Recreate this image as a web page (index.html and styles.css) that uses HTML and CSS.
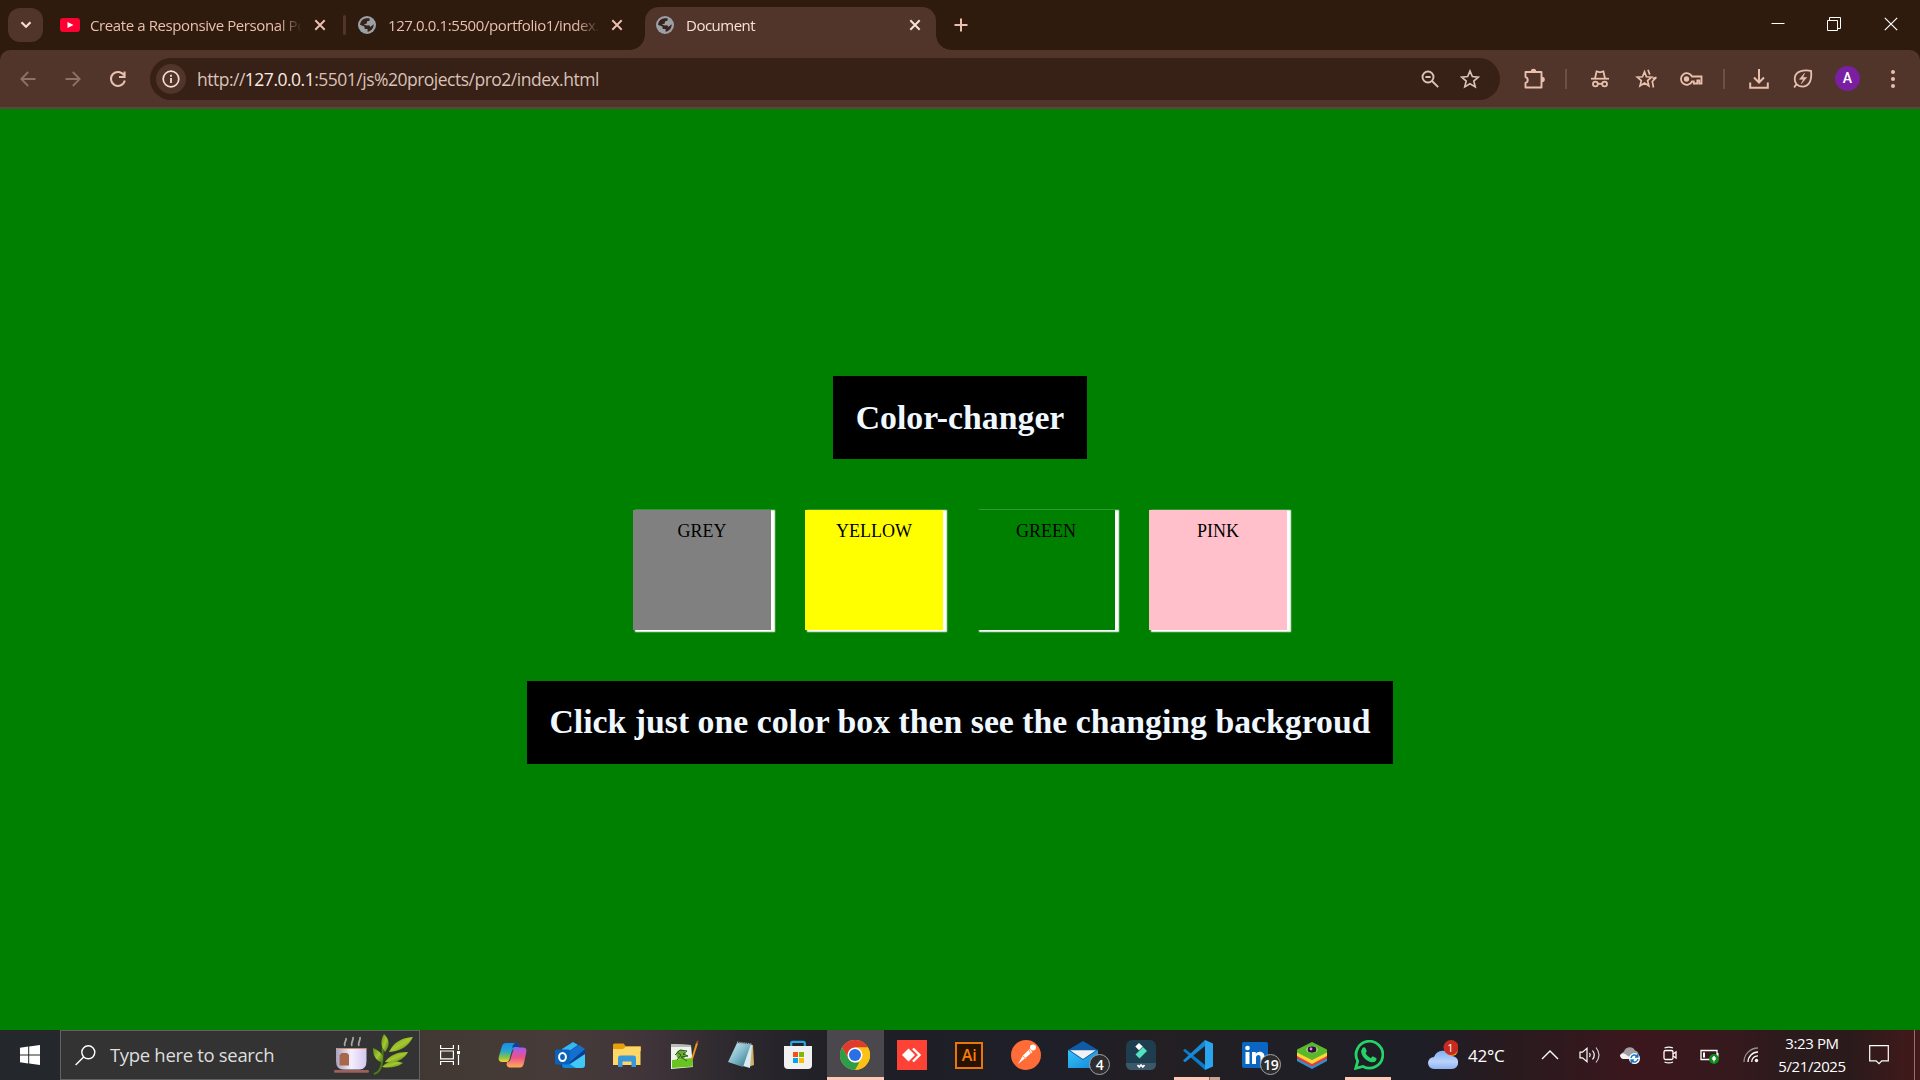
FILE: index.html
```html
<!DOCTYPE html>
<html lang="en">
<head>
<meta charset="utf-8">
<title>Document</title>
<link rel="stylesheet" href="styles.css">
</head>
<body>
<svg class="defs" width="0" height="0" aria-hidden="true">
  <defs>
    <symbol id="x" viewBox="0 0 12 12"><path d="M1.3 1.3l9.4 9.4M10.7 1.3l-9.4 9.4" fill="none" stroke="currentColor" stroke-width="2"/></symbol>
    <symbol id="globe" viewBox="0 0 18 18"><circle cx="9" cy="9" r="9" fill="#9aa0a6"/><path d="M8.2 2.2L11.5 2.2L11.7 4.4L9.2 5.6L8.8 7.4L5.7 8.6L8.9 9.4L11.4 9.3L12.2 11L15.7 8.2C15.8 11.8 13.7 15 9.6 15.8L9.5 13.1L6.8 13L6.3 10.6L2 8.8C2.4 5 4.7 2.7 8.2 2.2Z" fill="#38221a"/><path d="M9.2 5.5L12.8 4.8L14.2 7.1L11.5 8.7L8.7 7.5Z" fill="#9aa0a6"/></symbol>
    <linearGradient id="cp1" x1="0" y1="0" x2="0" y2="1"><stop offset="0" stop-color="#168cf0"/><stop offset=".45" stop-color="#2aa9c8"/><stop offset=".75" stop-color="#82c34c"/><stop offset="1" stop-color="#ffd02c"/></linearGradient>
    <linearGradient id="cp2" x1="0" y1="0" x2="0" y2="1"><stop offset="0" stop-color="#a45bf0"/><stop offset=".5" stop-color="#ec5288"/><stop offset="1" stop-color="#ffae55"/></linearGradient>
    <linearGradient id="cloud" x1="0" y1="0" x2="0" y2="1"><stop offset="0" stop-color="#7fb0f2"/><stop offset=".6" stop-color="#b9d2fb"/><stop offset="1" stop-color="#8fb1ef"/></linearGradient>
    <linearGradient id="cup" x1="0" y1="0" x2="1" y2="0"><stop offset="0" stop-color="#a8a0bf"/><stop offset=".5" stop-color="#f4efff"/><stop offset="1" stop-color="#d4c6ee"/></linearGradient>
    <linearGradient id="leaf" x1="0" y1="0" x2="1" y2="1"><stop offset="0" stop-color="#5d8f13"/><stop offset=".5" stop-color="#a7c930"/><stop offset="1" stop-color="#3c6f12"/></linearGradient>
    <linearGradient id="pad" x1="0" y1="0" x2="1" y2="1"><stop offset="0" stop-color="#d4f0f4"/><stop offset=".5" stop-color="#7fb9c9"/><stop offset="1" stop-color="#28687d"/></linearGradient>
    <linearGradient id="mail" x1="0" y1="0" x2="1" y2="1"><stop offset="0" stop-color="#35c3f7"/><stop offset="1" stop-color="#1486d8"/></linearGradient>
  </defs>
</svg>

<header class="tabstrip">
  <button class="tab-search"><svg width="12" height="8" viewBox="0 0 12 8"><path d="M1.5 1.3L6 5.8l4.5-4.5" fill="none" stroke="#f5ded5" stroke-width="2.2"/></svg></button>
  <div class="tab tab-first">
    <svg class="fav" width="20" height="14" viewBox="0 0 20 14"><rect width="20" height="14" rx="3" fill="#ff0033"/><path d="M7.5 4l6 3-6 3z" fill="#fff"/></svg>
    <span class="title t1">Create a Responsive Personal Po</span>
    <svg class="close" width="12" height="12"><use href="#x"/></svg>
  </div>
  <i class="tab-sep"></i>
  <div class="tab">
    <svg class="fav" width="18" height="18"><use href="#globe"/></svg>
    <span class="title t2">127.0.0.1:5500/portfolio1/index.</span>
    <svg class="close" width="12" height="12"><use href="#x"/></svg>
  </div>
  <div class="tab active">
    <svg class="fav" width="18" height="18"><use href="#globe"/></svg>
    <span class="title t3">Document</span>
    <svg class="close" width="12" height="12"><use href="#x"/></svg>
  </div>
  <button class="new-tab"><svg width="14" height="14" viewBox="0 0 14 14"><path d="M7 .5v13M.5 7h13" stroke="currentColor" stroke-width="2"/></svg></button>
  <div class="win">
    <span class="w-min"><svg width="14" height="14" viewBox="0 0 14 14"><path d="M.5 6.500h13" stroke="#fff" stroke-width="1"/></svg></span>
    <span class="w-max"><svg width="14" height="14" viewBox="0 0 14 14" fill="none" stroke="#fff"><path d="M.5 3.500h10v10H.5zM2.500 3.500V.5h11v11H11"/></svg></span>
    <span class="w-close"><svg width="14" height="14" viewBox="0 0 14 14"><path d="M.8.8l12.4 12.4M13.2.8L.8 13.2" stroke="#fff" stroke-width="1.2"/></svg></span>
  </div>
</header>

<nav class="toolbar">
  <div class="nav-buttons">
    <span class="dim"><svg width="16" height="16" viewBox="0 0 16 16" fill="none" stroke="currentColor" stroke-width="1.8"><path d="M15.5 8H1.6M8.2 1L1.3 8l6.9 7"/></svg></span>
    <span class="dim"><svg width="16" height="16" viewBox="0 0 16 16" fill="none" stroke="currentColor" stroke-width="1.8"><path d="M.5 8h13.9M7.8 1l6.9 7-6.9 7"/></svg></span>
    <span><svg width="18" height="18" viewBox="0 0 18 18" fill="none" stroke="currentColor" stroke-width="2"><path d="M15 5.3A7 7 0 1 0 15.8 10.5M15.6 1.6V7H10"/></svg></span>
  </div>
  <div class="omnibox">
    <span class="info"><svg width="18" height="18" viewBox="0 0 18 18"><circle cx="9" cy="9" r="7.8" fill="none" stroke="#f5ded5" stroke-width="1.7"/><path d="M9 8v5M9 4.8v1.9" stroke="#f5ded5" stroke-width="1.8"/></svg></span>
    <span class="url">http://<b>127.0.0.1</b>:5501/js%20projects/pro2/index.html</span>
    <svg class="o-zoom" width="18" height="18" viewBox="0 0 18 18" fill="none" stroke="#d9c2ba" stroke-width="1.9"><circle cx="7" cy="7" r="5.5"/><path d="M11 11l6.2 6.2M4.4 7h5.2"/></svg>
    <svg width="20" height="20" viewBox="0 0 18 18" fill="none" stroke="#d9c2ba" stroke-width="1.5"><path d="M9 1.8l2.1 5 5.4.5-4.1 3.500 1.300 5.300L9 13.300l-4.700 2.800 1.300-5.300-4.100-3.500 5.400-.5z"/></svg>
  </div>
  <div class="actions">
    <span class="s-ext"><svg width="22" height="22" viewBox="0 0 22 22"><path d="M2.500 4h16v15.500h-16v-4.600a3 3 0 0 0 0-5.800z" fill="none" stroke="currentColor" stroke-width="1.9" stroke-linejoin="round"/><path d="M7.8 3.500a2.700 2.700 0 0 1 5.400 0zM19 8.700a2.700 2.700 0 0 1 0 5.600z" fill="currentColor"/></svg></span>
    <span class="s-sep"><i></i></span>
    <span class="s-inc"><svg width="18" height="18" viewBox="0 0 18 18" fill="none" stroke="currentColor" stroke-width="1.8"><path d="M0 8.700h18"/><path d="M4 8.500L5.600 1.300 9 2.300l3.400-1L14 8.500"/><circle cx="4.400" cy="14" r="2.400"/><circle cx="13.600" cy="14" r="2.400"/><path d="M6.800 13.800h4.400"/></svg></span>
    <span class="s-star"><svg width="22" height="20" viewBox="0 0 22 20" fill="none" stroke="currentColor" stroke-width="1.700"><path d="M9.500 2.800l1.900 5 5.200.4-4 3.400 1.300 5.200-4.400-2.800L5 16.800l1.300-5.200-4-3.400 5.200-.4z"/><path d="M13 .8l1.800 4.800M17.500 9.500L21.500 8.300M21.300 8.300l-4 4.200 1.200 6"/></svg></span>
    <span class="s-key"><svg width="24" height="16" viewBox="0 0 24 16" fill="none" stroke="currentColor" stroke-width="1.800"><path d="M13 5.500h9.500v7h-2.200V9.500h-2v3h-3.500v-2H13a5.800 5.800 0 1 1 0-5z"/><circle cx="7.500" cy="8" r="2.700" fill="currentColor" stroke="none"/></svg></span>
    <span class="s-sep"><i></i></span>
    <span class="s-dl"><svg width="20" height="22" viewBox="0 0 20 22" fill="none" stroke="currentColor" stroke-width="2"><path d="M10 1v13M5 9.500l5 5 5-5M1.200 14.500v5.300h17.600v-5.300"/></svg></span>
    <span class="s-leaf"><svg width="20" height="20" viewBox="0 0 20 20" fill="none" stroke="currentColor" stroke-width="1.800"><path d="M18 1.800C11 .8 1.700 1.600 1.700 10c0 2 .5 3.600 1.700 5 1.500 1.700 4 2.600 6.600 2.600C17.500 17 19 9 18 1.800zM3.400 15L1.200 18.500"/><path d="M11.500 4.300L6.500 10.300h4L8.300 14.700l5.400-6.200H9.800z" fill="currentColor" stroke-width=".6"/></svg></span>
    <span class="s-ava"><b>A</b></span>
    <span class="s-dots"><svg width="4" height="18" viewBox="0 0 4 18" fill="currentColor"><circle cx="2" cy="2" r="2"/><circle cx="2" cy="9" r="2"/><circle cx="2" cy="16" r="2"/></svg></span>
  </div>
</nav>

<main class="page">
  <h1 class="banner banner-top">Color-changer</h1>
  <div class="boxes">
    <div class="box grey">GREY</div>
    <div class="box yellow">YELLOW</div>
    <div class="box green">GREEN</div>
    <div class="box pink">PINK</div>
  </div>
  <h1 class="banner">Click just one color box then see the changing backgroud</h1>
</main>

<footer class="taskbar">
  <span class="start"><svg width="20" height="20" viewBox="0 0 20 20" fill="#fff"><path d="M0 2.700L8.200 1.500V9.500H0zM9.200 1.400L20 0v9.500H9.200zM0 10.500h8.200v8L0 17.300zM9.200 10.500H20V20L9.200 18.600z"/></svg></span>
  <div class="search">
    <svg width="21" height="21" viewBox="0 0 21 21" fill="none" stroke="#fff" stroke-width="1.400"><circle cx="13.300" cy="7.300" r="6.500"/><path d="M8.600 12L.6 20"/></svg>
    <span class="search-text">Type here to search</span>
    <svg class="tea" width="80" height="42" viewBox="0 0 80 42">
      <path d="M11 12c-2-3 2-5 1-8M18 12c-2-3 2-5 1-9M25 12c-2-3 2-5 1-9" fill="none" stroke="#aaa5a5" stroke-width="1.800"/>
      <rect x="0" y="36" width="35" height="2.800" rx="1.400" fill="#9a6258"/>
      <path d="M2 14h30.500v13q0 8.500-7 8.500H9q-7 0-7-8.500z" fill="url(#cup)"/><path d="M3 14.500h29" stroke="#c98d68" stroke-width="1"/>
      <path d="M5.500 21l2-2h5.500l2 2v10.500H5.500z" fill="#a76749"/>
      <path d="M40 40c10-3 8-16 9-32" fill="none" stroke="#4d7d14" stroke-width="2"/>
      <g fill="url(#leaf)"><path d="M50 0c6 6 6 12 1 18-4-6-5-11-1-18z"/><path d="M79 3c-5 10-13 14-24 15 5-10 12-14 24-15z"/><path d="M39 14c8 3 11 8 10 15-7-2-10-7-10-15z"/><path d="M74 18c-5 9-13 11-23 10 5-7 12-10 23-10z"/><path d="M69 29c-7 5-14 5-21 4 5-6 12-7 21-4z"/></g>
    </svg>
  </div>
  <span class="taskview"><svg width="20" height="20" viewBox="0 0 20 20" fill="none" stroke="#fff" stroke-width="1.200"><path d="M.6 0v3.500h12.800V0M.6 20v-3.500h12.800V20M.6 6h12.800v7.800H.6zM18.500 0v5M18.500 10v10"/><path d="M17 6h3v3.200h-3z" fill="#fff" stroke="none"/></svg></span>

  <div class="apps">
    <span class="app"><svg width="30" height="28" viewBox="0 0 30 28"><path d="M8 2h10c2 0 3 1 3.500 3L20 8h-3c-2 0-3 1-3.500 3l-2 7c-.8 2.500-2 3-4 3H4c-3 0-4-2.500-3-6L4 5c.6-2 2-3 4-3z" fill="url(#cp1)"/><path d="M17 2h2c2 0 2.500 2 3 4h-5c-2 0-3 1-3.500 3L15 4z" fill="#173d98"/><path d="M22 26.500H12c-2 0-3-1-3.500-3L9 21c2 0 3-1 3.500-3l2.500-8c1-3 2-3.500 4.500-3.500H25c3 0 4 2 3.200 5L26 22c-.7 3-2 4.500-4 4.500z" fill="url(#cp2)"/></svg></span>
    <span class="app"><svg width="30" height="28" viewBox="0 0 30 28"><path d="M6 9L18 1l12 8v18H6z" fill="#0b3f91"/><path d="M7 8L18 1l5 3-16 11z" fill="#39b7ef"/><path d="M8 14L24 4l6 4-15 13z" fill="#1470ce"/><path d="M9 27l21-14v11q0 3-3 3z" fill="#42c8f4"/><path d="M7 18l14 9H10q-3 0-3-3z" fill="#1188d9"/><rect y="8.500" width="15" height="15" rx="1.500" fill="#0a62bd"/><ellipse cx="7.500" cy="16" rx="3.400" ry="4" fill="none" stroke="#fff" stroke-width="2"/></svg></span>
    <span class="app"><svg width="28" height="24" viewBox="0 0 28 24"><path d="M0 2q0-1.500 1.500-1.500h9l2.500 3h15V8H0z" fill="#e5a00b"/><path d="M0 6h10l3-2.500h14.500V22H0z" fill="#ffd767"/><path d="M5 24v-9q0-2.500 2.500-2.500h13Q23 12.500 23 15v9h-4.500v-5.500h-9V24z" fill="#3898dc"/></svg></span>
    <span class="app"><svg width="30" height="30" viewBox="0 0 30 30"><path d="M2 4l20 1 2 22L2 29z" fill="#f0f2ec"/><path d="M3 20l20-2 1 8.500L3 28z" fill="#68c520"/><path d="M2 4l20 1v2H2z" fill="#b9bdb9"/><circle cx="12" cy="14.500" r="4.800" fill="#6eaa36"/><path d="M6 15l5-5 7 1-4 3 5 2-7 1 6 4M8 20l4-5-4-3" fill="none" stroke="#2d5d1b" stroke-width="1"/><path d="M27 3l2 .6-5 15.400-1.800 2 .2-3z" fill="#e59a1e"/><path d="M27 3l1-2.500 1.500.6L29 3.600z" fill="#a04c36"/></svg></span>
    <span class="app"><svg width="28" height="28" viewBox="0 0 28 28"><path d="M10 2l16 2 1 20-6 2z" fill="#d2b06a"/><path d="M10 2l15 2-2 23-7-2z" fill="#d5edf2"/><path d="M10 2l14 1-8 23L1 21z" fill="url(#pad)"/><path d="M10 1.500L25 3.500" stroke="#9aa" stroke-width="2.200" stroke-dasharray="1.200 1"/></svg></span>
    <span class="app"><svg width="30" height="30" viewBox="0 0 30 30"><path d="M8.200 7V3.200Q8.200 1.800 9.600 1.800h10.800q1.400 0 1.400 1.400V7" fill="none" stroke="#27a6e8" stroke-width="2.200"/><path d="M1 6h28v19q0 4-4 4H5q-4 0-4-4z" fill="#f1f1f1"/><path d="M10 12h5v5h-5z" fill="#f1511b"/><path d="M16 12h5v5h-5z" fill="#80b900"/><path d="M10 18h5v5h-5z" fill="#00a4ef"/><path d="M16 18h5v5h-5z" fill="#fbbc09"/></svg></span>
    <span class="app current"><svg width="30" height="30" viewBox="0 0 30 30"><circle cx="15" cy="15" r="15" fill="#fbc116"/><path d="M2 7.500A15 15 0 0 1 28 7.500H15L8.500 18.800z" fill="#e03b2f"/><path d="M2 7.500L8.500 18.800Q11 22.500 15 22.500h6.500L15 30A15 15 0 0 1 2 7.500z" fill="#2d9d49"/><path d="M21.500 18.700L15 30A15 15 0 0 0 28 7.500H15z" fill="#fbc116"/><circle cx="15" cy="15" r="7.500" fill="#fff"/><circle cx="15" cy="15" r="6" fill="#2b6fe4"/></svg></span>
    <span class="app"><svg width="30" height="30" viewBox="0 0 30 30"><path d="M0 0h30v30H0z" fill="#fe4236"/><path d="M5 15l6.500-6.500L18 15l-6.500 6.500z" fill="#fff"/><path d="M16 8.500l6.500 6.500-6.500 6.500" fill="none" stroke="#fff" stroke-width="2.400"/></svg></span>
    <span class="app ai"><b>Ai</b></span>
    <span class="app"><svg width="30" height="30" viewBox="0 0 30 30"><circle cx="15" cy="15" r="15" fill="#ff6c37"/><circle cx="22" cy="7.500" r="3" fill="#fff"/><path d="M18.500 9l3 3-6.500 5.500-8 6.500 5-8.500z" fill="#fff"/><path d="M12 16l3 3M18 10l2 4" stroke="#ff9b78" stroke-width="1"/></svg></span>
    <span class="app"><svg width="30" height="30" viewBox="0 0 30 30"><path d="M0 10L15 1l15 9v18H0z" fill="#0e5ba8"/><path d="M0 10l15 10 15-10v18H0z" fill="url(#mail)"/><path d="M2 10.300h26L15 19z" fill="#f2f2f2"/></svg><b class="badge">4</b></span>
    <span class="app"><svg width="30" height="30" viewBox="0 0 30 30"><rect width="30" height="30" rx="6" fill="#1e3d4e"/><path d="M0 23h30v1q0 6-6 6H6q-6 0-6-6z" fill="#3b586a"/><path d="M13 3l3.800 3.500L13 10.300 9.300 6.500z" fill="#fff"/><path d="M17 7l4 4-7.500 7.500-4-4z" fill="#50e3c2"/><path d="M11.500 25l1.700 2 1.800-2 1.800 2 1.700-2" fill="none" stroke="#fff" stroke-width="1.800"/></svg></span>
    <span class="app run-split"><svg width="30" height="30" viewBox="0 0 30 30"><path d="M0 10.500l2-1.800 20 16.300v5z" fill="#087bcb"/><path d="M0 20.500l2 1.800L22 6V0z" fill="#168ad8"/><path d="M22 0l8 3.500v23L22 30z" fill="#2aa4ef"/></svg></span>
    <span class="app"><svg width="30" height="30" viewBox="0 0 30 30"><rect x="2" y="2" width="26" height="26" rx="2" fill="#0a66c2"/><path d="M5.500 12h4v12h-4zM12 12h3.700v1.700c2-3 8.800-3 8.800 3V24h-4v-6.500c0-3.500-4.500-3-4.500 0V24h-4z" fill="#fff"/><circle cx="7.500" cy="8" r="2.300" fill="#fff"/></svg><b class="badge">19</b></span>
    <span class="app"><svg width="30" height="28" viewBox="0 0 30 28"><path d="M0 17l15 8 15-8v3l-15 8-15-8z" fill="#2695d9"/><path d="M0 14l15 8 15-8v3.500l-15 8-15-8z" fill="#e93c37"/><path d="M0 10.500l15 8 15-8V15l-15 8-15-8z" fill="#ffd43b"/><path d="M0 8.500L15 1l15 7.500v3L15 19 0 11.500z" fill="#5ab928"/><ellipse cx="15" cy="8.500" rx="5.500" ry="3.600" fill="#e9f3e2"/><ellipse cx="15" cy="8.500" rx="4.500" ry="3.200" fill="#261334"/><circle cx="14" cy="8" r="1.400" fill="#eb83e0"/></svg></span>
    <span class="app run"><svg width="30" height="30" viewBox="0 0 30 30"><path d="M1.700 28.300l2-7.200A13.400 13.400 0 1 1 9 26.400z" fill="none" stroke="#25d366" stroke-width="2.800"/><path d="M8.500 8q1.500-1.500 2.800-.2l1.500 3.500-1.300 1.900q2 3.500 5.300 5l1.900-1.900 3.400 1.700q1.300.7-.3 3-3 2.600-7.800 0Q9 18 7.500 13.500 6.500 10.500 8.500 8z" fill="#25d366"/></svg></span>
  </div>

  <div class="tray">
    <span class="weather"><svg width="30" height="30" viewBox="0 0 30 30"><path d="M6 29a6 6 0 0 1 0-12 9.500 9.500 0 0 1 17.500-1A6.500 6.500 0 0 1 24 29z" fill="url(#cloud)"/><circle cx="24" cy="10" r="6" fill="#ee9b20"/><circle cx="23" cy="7.500" r="7.500" fill="#c92a1e"/></svg><b class="alert">1</b><span class="temp">42°C</span></span>
    <span class="t-chev"><svg width="18" height="10" viewBox="0 0 18 10"><path d="M1 9l8-8 8 8" fill="none" stroke="#fff" stroke-width="1.400"/></svg></span>
    <span class="t-ico"><svg width="22" height="18" viewBox="0 0 22 18" fill="none" stroke="#fff" stroke-width="1.200"><path d="M1 6.200h2.500L8 2.300v13.400l-4.500-3.900H1z"/><path d="M10.500 7q1.500 2 0 4M13.500 4.500q3.500 4.500 0 9"/><path d="M17 1.500q6 7.500 0 15" opacity=".75"/></svg></span>
    <span class="t-ico"><svg width="20" height="18" viewBox="0 0 20 18"><path d="M4 13a4 4 0 0 1 0-7.500 6 6 0 0 1 11-1 4 4 0 0 1 3 6L12 13z" fill="#a29da0"/><path d="M0 9q2-3 5-1l6 4v1H3q-3-1-3-4z" fill="#f3f3f3"/><circle cx="14.500" cy="12.500" r="5.500" fill="#fff"/><path d="M11 12a3.600 3.600 0 0 1 6.500-1.500M18 13a3.600 3.600 0 0 1-6.500 1.500M17.800 8v3H15M11.200 17v-3H14" fill="none" stroke="#1677c8" stroke-width="1.500"/></svg></span>
    <span class="t-ico"><svg width="16" height="18" viewBox="0 0 16 18" fill="none" stroke="#fff" stroke-width="1.300"><rect x="2" y="4.500" width="9" height="9" rx="1.500"/><path d="M11 8l3-2v6l-3-2M2.500 2Q7 .2 11 2M2.500 16q4.500 1.800 8.500 0"/></svg></span>
    <span class="t-ico"><svg width="20" height="18" viewBox="0 0 20 18"><path d="M1 4.500h16v9H1z" fill="none" stroke="#fff" stroke-width="1.300"/><path d="M3 6.500h2v5H3zM17 7h1.500v4H17z" fill="#fff"/><circle cx="14" cy="13" r="5" fill="#108a1e"/><path d="M14 10q3.500 3 0 4.500-3.500-1.500 0-4.500zM14 13v3.500" fill="#fff" stroke="#fff" stroke-width=".6"/></svg></span>
    <span class="t-wifi"><svg width="16" height="16" viewBox="0 0 16 16" fill="none" stroke="#fff" stroke-width="1.300"><circle cx="13.500" cy="13.500" r="1.700" fill="#fff" stroke="none"/><path d="M8.700 15A6 6 0 0 1 15 8.800M5 15A10 10 0 0 1 15 5"/><path d="M1 15A14 14 0 0 1 15 1" opacity=".5"/></svg></span>
    <div class="clock"><span>3:23 PM</span><span>5/21/2025</span></div>
    <span class="t-note"><svg width="20" height="20" viewBox="0 0 20 20"><path d="M.7.7h18.600v15.100h-6.500L10 18.600l-2.800-2.800H.7z" fill="none" stroke="#fff" stroke-width="1.200"/></svg></span>
    <i class="peek"></i>
  </div>
</footer>
</body>
</html>
```

FILE: styles.css
```css
* { box-sizing: border-box; }
body {
  margin: 0;
  width: 1920px;
  height: 1080px;
  overflow: hidden;
  display: flex;
  flex-direction: column;
  background: #2f1a0e;
  font-family: "Open Sans", "Noto Sans", sans-serif;
}
.defs { position: absolute; }
svg { display: block; flex: none; }
button { border: 0; padding: 0; background: none; color: inherit; }

/* tab strip */
.tabstrip {
  height: 50px;
  flex: none;
  display: flex;
  align-items: flex-end;
  padding-left: 8px;
  color: #e9bfad;
}
.tab-search {
  width: 35px;
  height: 34px;
  margin: 0 6px 8px 0;
  border-radius: 12px;
  background: #51342a;
  display: flex;
  align-items: center;
  justify-content: center;
}
.tab {
  position: relative;
  width: 291px;
  height: 43px;
  margin-right: 7px;
  padding: 0 15px 7px 11px;
  display: flex;
  align-items: center;
}
.tab-first { margin-right: 0; padding-right: 14px; }
.tab-sep { width: 3px; height: 20px; margin: 0 1px 15px 3px; border-radius: 2px; background: #51342a; }
.fav { margin-right: 12px; }
.tab-first .fav { margin-right: 10px; }
.title {
  width: 216px;
  white-space: nowrap;
  font-size: 15px;
  line-height: 22px;
  mask-image: linear-gradient(to right, #000 188px, transparent 212px);
}
.t1 { letter-spacing: -0.4px; }
.t2 { letter-spacing: -0.4px; }
.t3 { letter-spacing: -0.5px; }
.close { margin-left: auto; }
.active {
  background: #51342a;
  color: #f8e2d9;
  border-radius: 14px 14px 0 0;
  margin-right: 0;
}
.active::before, .active::after {
  content: "";
  position: absolute;
  bottom: 0;
  width: 15px;
  height: 15px;
}
.active::before { left: -15px; background: radial-gradient(circle at 0 0, transparent 14.5px, #51342a 15px); }
.active::after { right: -15px; background: radial-gradient(circle at 100% 0, transparent 14.5px, #51342a 15px); }
.new-tab { width: 49px; height: 50px; display: flex; align-items: center; justify-content: center; }
.win { margin-left: auto; height: 50px; display: flex; align-items: center; padding-bottom: 2px; }
.win span { display: flex; justify-content: center; }
.w-min { width: 56px; }
.w-max { width: 56px; }
.w-close { width: 58px; }

/* toolbar */
.toolbar {
  height: 59px;
  flex: none;
  display: flex;
  align-items: center;
  padding-left: 5px;
  background: #51342a;
  border-radius: 10px 10px 0 0;
  border-bottom: 2px solid #58473c;
  color: #e9bfad;
}
.nav-buttons { display: flex; width: 145px; }
.nav-buttons span { width: 45px; display: flex; align-items: center; justify-content: center; }
.dim { color: #8e7065; }
.omnibox {
  width: 1350px;
  height: 42px;
  border-radius: 21px;
  background: #372015;
  display: flex;
  align-items: center;
  padding: 0 20px 0 6px;
}
.info { width: 30px; height: 30px; border-radius: 50%; background: #51342a; display: flex; align-items: center; justify-content: center; }
.url { margin-left: 11px; font-size: 17.5px; color: #d9c2ba; letter-spacing: -0.5px; white-space: nowrap; }
.url b { font-weight: 400; color: #fbeae3; }
.o-zoom { margin-left: auto; margin-right: 21px; }
.actions { margin-left: 12px; display: flex; align-items: center; }
.actions span { display: flex; align-items: center; justify-content: center; }
.actions i { width: 2px; height: 20px; background: #714e42; }
.s-ext { width: 43px; }
.s-sep { width: 22px; }
.s-inc { width: 46px; }
.s-star { width: 45px; }
.s-key { width: 45px; }
.s-dl { width: 47px; }
.s-leaf { width: 41px; }
.s-ava { width: 49px; }
.s-ava b {
  width: 25px;
  height: 25px;
  border-radius: 50%;
  background: #7b1fa2;
  color: #fff;
  font: 500 14px/25px Roboto, sans-serif;
  text-align: center;
}
.s-dots { width: 41px; }

/* page */
.page {
  height: 921px;
  flex: none;
  display: flex;
  flex-direction: column;
  align-items: center;
  padding-top: 267px;
  background: #008000;
  font-family: "Liberation Serif", "Times New Roman", serif;
}
.banner {
  margin: 0;
  height: 83px;
  padding: 0 22.5px;
  background: #000;
  color: aliceblue;
  font-size: 33.75px;
  line-height: 82px;
}
.banner-top { line-height: 84px; }
.boxes { display: flex; gap: 34px; margin: 51px 0; }
.box {
  width: 138px;
  height: 120px;
  padding-top: 11px;
  text-align: center;
  font-size: 18px;
  line-height: 21px;
  color: #000;
  box-shadow: 3.2px 1.125px 1.125px 1.125px #fff;
}
.grey { background: grey; }
.yellow { background: yellow; }
.green { background: green; }
.pink { background: pink; }

/* taskbar */
.taskbar {
  height: 50px;
  flex: none;
  display: flex;
  align-items: center;
  color: #fff;
  background: linear-gradient(to right, #24272b 0, #24272b 60px, #423833 420px, #463b38 560px, #41353a 640px, #2b282d 740px, #1e1e26 850px, #1f1f29 1060px, #231f22 1160px, #201f26 1300px, #1e1e26 1420px, #2a1a1e 1520px, #3b171d 1640px, #34191d 1740px, #291b1c 1800px, #2b1a1b 1850px, #43191a 1920px);
}
.start { width: 60px; display: flex; justify-content: center; }
.search {
  width: 360px;
  height: 50px;
  border: 1px solid #626262;
  background: #333;
  display: flex;
  align-items: center;
  padding: 0 5px 0 14px;
}
.search-text { margin: 0 0 2px 14px; font-size: 18.5px; letter-spacing: -0.32px; color: #dedede; white-space: nowrap; }
.tea { margin-left: auto; }
.taskview { width: 60px; display: flex; justify-content: center; }
.apps { display: flex; margin-left: 4px; }
.app {
  position: relative;
  width: 57.1px;
  height: 50px;
  display: flex;
  align-items: center;
  justify-content: center;
}
.current { background: #4a484c; box-shadow: inset 0 -3px #ffc8b4; }
.run::after, .run-split::after {
  content: "";
  position: absolute;
  left: 5px;
  bottom: 0;
  width: 46px;
  height: 3px;
  background: #ffc8b4;
}
.run-split::after { background: linear-gradient(to right, #ffc8b4 35px, #77665f 35px, #77665f 36px, #cba193 36px); }
.ai b {
  width: 28px;
  height: 27px;
  border: 2px solid #e8760c;
  background: #271300;
  color: #f57d0d;
  font: 600 16px/22px "Open Sans", sans-serif;
  text-align: center;
}
.badge {
  position: absolute;
  left: 34px;
  top: 24px;
  width: 21px;
  height: 21px;
  border: 1px solid #a5a5a5;
  border-radius: 50%;
  background: #2d2d30;
  font-size: 14px;
  font-weight: 600;
  line-height: 19px;
  text-align: center;
  letter-spacing: -0.5px;
}
.tray { display: flex; align-items: center; height: 50px; margin-left: auto; }
.weather { position: relative; display: flex; align-items: center; width: 102px; height: 50px; }
.alert { position: absolute; left: 15px; top: 8px; width: 15px; font-size: 11px; font-weight: 400; line-height: 19px; text-align: center; }
.temp { margin-left: 10px; font-size: 17px; letter-spacing: -0.2px; }
.t-chev, .t-ico, .t-wifi, .t-note { display: flex; justify-content: center; width: 40px; }
.t-wifi { width: 41px; }
.clock { width: 82px; height: 50px; display: flex; flex-direction: column; align-items: center; font-size: 15px; line-height: 23px; letter-spacing: -0.4px; padding-top: 2px; white-space: nowrap; }
.t-note { width: 52px; }
.peek { width: 1px; height: 50px; margin: 0 5px 0 9px; background: #8b7475; }
```
